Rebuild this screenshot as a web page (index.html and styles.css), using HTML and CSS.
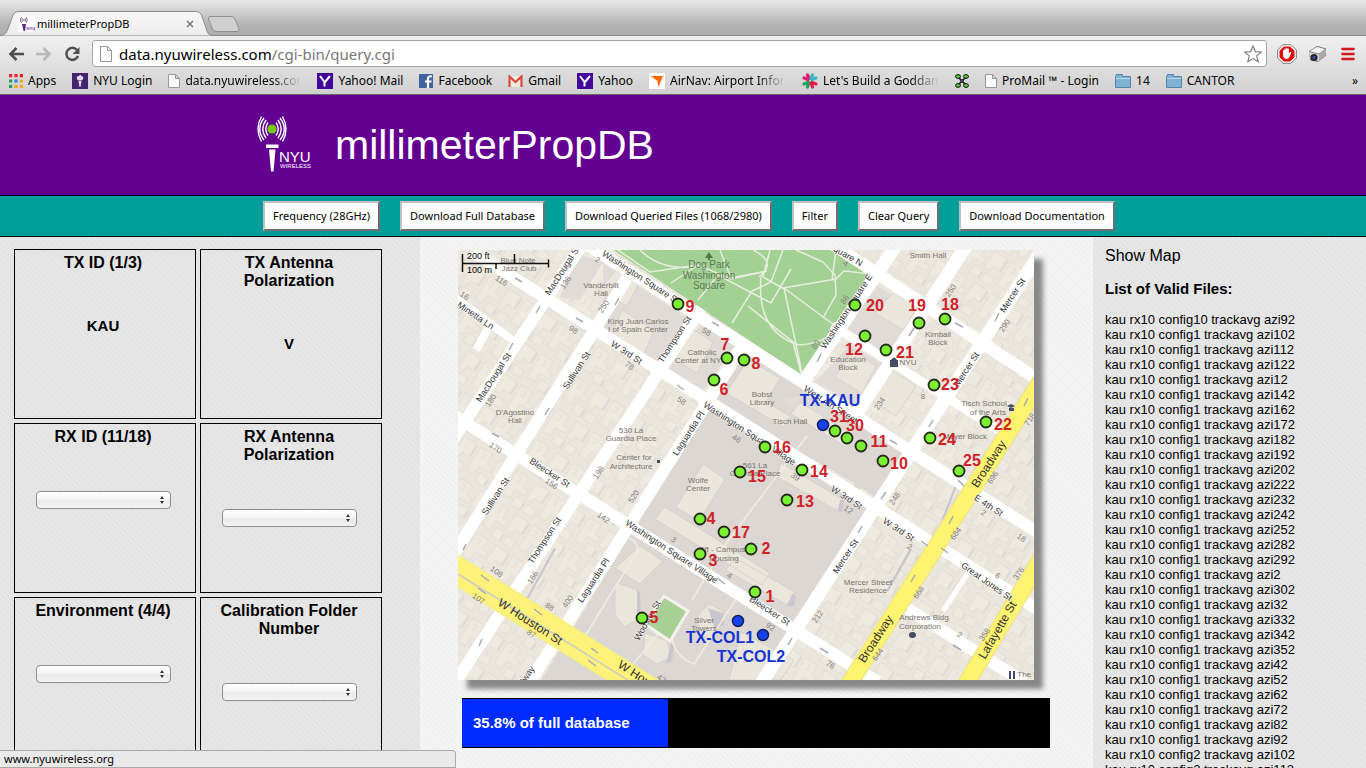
FILE: index.html
```html
<!DOCTYPE html>
<html lang="en">
<head>
<meta charset="utf-8">
<title>millimeterPropDB</title>
<link rel="stylesheet" href="styles.css">
</head>
<body>
<div class="browser">
  <div class="tabstrip">
    <svg class="tab-shapes" viewBox="0 0 250 36" aria-hidden="true">
      <defs><linearGradient id="tabfill" x1="0" y1="0" x2="0" y2="1"><stop offset="0" stop-color="#f7f7f7"/><stop offset="1" stop-color="#ececec"/></linearGradient></defs>
      <path d="M-2 36 L3 35 Q6 34 7.500 30 L13 15 Q14.500 11.500 18 11.500 H196 Q200 11.500 201.500 15 L207 31 Q208.500 35 211 35.500 L212 36Z" fill="url(#tabfill)" stroke="#8c8c8c"/>
      <path d="M210 16.500 H231 Q234 16.500 235 19 L239 29 Q239.500 31.500 237 31.500 H217 Q213.500 31.500 212.500 29 L208.500 19 Q208 16.500 210 16.500Z" fill="#d0d0d0" stroke="#909090"/>
    </svg>
    <div class="tab">
      <svg class="fav" viewBox="0 0 16 16" aria-hidden="true"><rect width="16" height="16" fill="#fff"/><g fill="none" stroke="#8a5aa8"><path d="M2.500 1q-2.500 3 0 6M7 1q2.500 3 0 6M3.500 2.500q-1 1.500 0 3M6 2.500q1 1.500 0 3"/></g><circle cx="4.800" cy="4" r="1" fill="#7c3"/><path d="M3 8h4l-1 7h-1.500z" fill="#5a2b82"/><path d="M8 11v3M8 11l2 3v-3M11 11l1 1.500 1-1.500M12 12v2M14 11v3h1.500v-3" stroke="#8a5aa8" stroke-width=".8" fill="none"/></svg>
      <span class="tab-title">millimeterPropDB</span>
      <button class="tab-close" aria-label="Close tab"><svg viewBox="0 0 8 8"><path d="M1 1l6 6M7 1l-6 6" stroke="#777" stroke-width="1.500"/></svg></button>
    </div>
  </div>
  <div class="toolbar">
    <button class="nav" aria-label="Back"><svg viewBox="0 0 16 16"><path d="M8.500 2L2.500 8l6 6M3 8h13" fill="none" stroke="#505050" stroke-width="2.600"/></svg></button>
    <button class="nav" aria-label="Forward"><svg viewBox="0 0 16 16"><path d="M7.500 2l6 6-6 6M13 8H0" fill="none" stroke="#b8b8b8" stroke-width="2.600"/></svg></button>
    <button class="nav" aria-label="Reload"><svg viewBox="0 0 16 16"><path d="M13 4A6 6 0 1 0 14 10" fill="none" stroke="#505050" stroke-width="2.500"/><path d="M15.500 1v7h-7z" fill="#505050"/></svg></button>
    <form class="omnibox">
      <svg class="page-ico" viewBox="0 0 12 16" aria-hidden="true"><path d="M.5.5h7l4 4v11H.5zM7.500.5v4h4" fill="#fafafa" stroke="#969696"/></svg>
      <a class="url" href="#">data.nyuwireless.com<span>/cgi-bin/query.cgi</span></a>
      <svg class="star" viewBox="0 0 18 18" aria-hidden="true"><path d="M9 1l2.300 5.600 6 .4-4.600 3.900 1.500 5.900L9 13.600l-5.200 3.200 1.500-5.900L.7 7l6-.4z" fill="#fff" stroke="#808080" stroke-width="1.200"/></svg>
    </form>
    <button class="ext" aria-label="Ad blocker"><svg viewBox="0 0 20 20"><path d="M6 .7h8L19.300 6v8L14 19.300H6L.7 14V6z" fill="#fff" stroke="#777"/><path d="M6.800 2.500h6.400l4.300 4.300v6.400l-4.300 4.300H6.800l-4.300-4.300V6.800z" fill="#e00a0a"/><path d="M6 10V6.500q.7-1 1.400 0V5q.7-1 1.500 0v-.6q.8-1 1.600 0V5q.8-1 1.500 0v4.500l1.200-1.500q1.200-.3 1 .7L12.500 13q-1 2-3 2T6.500 13z" fill="#fff"/></svg></button>
    <button class="ext" aria-label="Camera"><svg viewBox="0 0 20 20"><path d="M1 8L9 2l9 2.500v7L10 18l-8-2z" fill="#777"/><path d="M1 7.500L9 2.500 18 5l-7 5z" fill="#f3f3f3" stroke="#666" stroke-width=".6"/><path d="M11 10l7-5v5.500L11 17z" fill="#aaa"/><path d="M1 8l10 2.500V17l-9-2z" fill="#d8d8d8"/><circle cx="6" cy="13.500" r="3.600" fill="#222"/><circle cx="6" cy="13.500" r="1.700" fill="#4050a0"/></svg></button>
    <button class="ext menu" aria-label="Menu"><svg viewBox="0 0 14 14"><path d="M1.500 2h11M1.500 7h11M1.500 12h11" stroke="#d4171e" stroke-width="2.600" stroke-linecap="round"/></svg></button>
  </div>
  <nav class="bookmarks" aria-label="Bookmarks">
    <a href="#" class="bm"><svg class="i14" viewBox="0 0 13 13"><path d="M0 0h3v3H0zM5 0h3v3H5zM10 0h3v3h-3z" fill="#e8252b"/><path d="M0 5h3v3H0zM0 10h3v3H0z" fill="#1fa24b"/><path d="M5 5h3v3H5z" fill="#2b80ea"/><path d="M10 5h3v3h-3zM5 10h3v3H5zM10 10h3v3h-3z" fill="#f8a51b"/></svg>Apps</a>
    <a href="#" class="bm"><svg class="i16" viewBox="0 0 16 16"><path d="M0 0h16v16H0z" fill="#46236e"/><path d="M5 6q-1-3 2-3 1-2 2.500 0 2.500.5 1.500 3-.5 1.500-3 1.500T5 6M6.500 8h3l-1 6h-1z" fill="#e5dcec"/></svg>NYU Login</a>
    <a href="#" class="bm"><svg class="i12" viewBox="0 0 12 14"><path d="M.5.5h7l4 4v9H.5zM7.500.5v4h4" fill="#fafafa" stroke="#969696"/></svg><span class="fade">data.nyuwireless.com</span></a>
    <a href="#" class="bm"><svg class="i16" viewBox="0 0 16 16"><path d="M0 0h16v16H0z" fill="#42069a"/><path d="M3 3l4.500 6v4.500M13 3L8 9" stroke="#fff" stroke-width="2" fill="none"/></svg>Yahoo! Mail</a>
    <a href="#" class="bm"><svg class="i14" viewBox="0 0 14 14"><path d="M0 0h14v14H0z" fill="#4360a0"/><path d="M13 2.500q-4-1-4 2.500v9M6 7.500h6.500" stroke="#fff" stroke-width="2.200" fill="none"/></svg>Facebook</a>
    <a href="#" class="bm"><svg class="i15" viewBox="0 0 15 12"><path d="M0 1h15v11H0z" fill="#eee9df"/><path d="M1.500 12V1.500l6 5.500 6-5.500V12" fill="none" stroke="#d9483b" stroke-width="2.200"/></svg>Gmail</a>
    <a href="#" class="bm"><svg class="i16" viewBox="0 0 16 16"><path d="M0 0h16v16H0z" fill="#42069a"/><path d="M3 3l4.500 6v4.500M13 3L8 9" stroke="#fff" stroke-width="2" fill="none"/></svg>Yahoo</a>
    <a href="#" class="bm"><svg class="i16" viewBox="0 0 16 16"><path d="M0 0h16v16H0z" fill="#fff"/><path d="M2 3h12L9.500 14 8.500 8z" fill="#f60"/></svg><span class="fade">AirNav: Airport Information</span></a>
    <a href="#" class="bm"><svg class="i16" viewBox="0 0 16 16"><g stroke-width="3.200" stroke-linecap="round"><path d="M2 5l4 1.500M5.500 2L7 5" stroke="#e31b6d"/><path d="M10.500 2L9 5.500M14 5l-4 1.500" stroke="#3bb7c5"/><path d="M2 11l4-1.500M5.500 14L7 10" stroke="#20a05a"/><path d="M14 11l-4-1.500M10.500 14L9 10" stroke="#e31b4d"/></g></svg><span class="fade">Let's Build a Goddamn</span></a>
    <a href="#" class="bm" aria-label="Quadcopter"><svg class="i14" viewBox="0 0 14 14"><path d="M2 2l10 10M12 2L2 12" stroke="#111" stroke-width="1.500"/><g fill="#5c3" stroke="#111"><ellipse cx="3" cy="2.500" rx="2.500" ry="1.900"/><ellipse cx="11" cy="2.500" rx="2.500" ry="1.900"/><ellipse cx="3" cy="11.500" rx="2.500" ry="1.900"/><ellipse cx="11" cy="11.500" rx="2.500" ry="1.900"/></g><path d="M6 6h2v2H6z" fill="#fff" stroke="#111"/></svg></a>
    <a href="#" class="bm"><svg class="i12" viewBox="0 0 12 14"><path d="M.5.5h7l4 4v9H.5zM7.500.5v4h4" fill="#fafafa" stroke="#969696"/></svg>ProMail ™ - Login</a>
    <a href="#" class="bm"><svg class="i16" viewBox="0 0 16 14"><path d="M.5 2.500q0-1 1-1V.5h6v2h8v11H.5z" fill="#7fb1d3" stroke="#5485a8"/><path d="M1 4.500h14" stroke="#b5d5ea"/></svg>14</a>
    <a href="#" class="bm"><svg class="i16" viewBox="0 0 16 14"><path d="M.5 2.500q0-1 1-1V.5h6v2h8v11H.5z" fill="#7fb1d3" stroke="#5485a8"/><path d="M1 4.500h14" stroke="#b5d5ea"/></svg>CANTOR</a>
    <a href="#" class="more">»</a>
  </nav>
</div>

<header class="banner">
  <svg class="logo" viewBox="256 114 56 60" role="img" aria-label="NYU Wireless">
    <g fill="none" stroke="#fff" stroke-width="1.400"><path d="M268 122.500q-4.500 6.500 0 13M266 120q-6.500 9 0 18M264 118q-8.500 11 0 22M261.500 116.500q-7 12.500 0 25"/><path d="M276 122.500q4.500 6.500 0 13M278 120q6.500 9 0 18M280 118q8.500 11 0 22M282.500 116.500q7 12.500 0 25"/></g>
    <circle cx="272" cy="129" r="4.600" fill="#7c1"/>
    <path d="M266 144.500h12.500v3.500H266zM269 149.500h6.500l-2 22h-2.500z" fill="#fff"/>
    <text x="279" y="162" class="logo-nyu">NYU</text><text x="280" y="168" class="logo-w">WIRELESS</text>
  </svg>
  <h1>millimeterPropDB</h1>
</header>
<div class="actions">
  <button>Frequency (28GHz)</button><button>Download Full Database</button><button>Download Queried Files (1068/2980)</button><button>Filter</button><button>Clear Query</button><button>Download Documentation</button>
</div>

<main class="content">
  <section class="filters" aria-label="Filters">
    <div class="card"><h2>TX ID (1/3)</h2><strong>KAU</strong></div>
    <div class="card"><h2>TX Antenna<br>Polarization</h2><strong>V</strong></div>
    <div class="card"><label for="rx">RX ID (11/18)</label><span class="pick"><select id="rx"><option></option></select></span></div>
    <div class="card"><label for="rxp">RX Antenna<br>Polarization</label><span class="pick"><select id="rxp"><option></option></select></span></div>
    <div class="card"><label for="env">Environment (4/4)</label><span class="pick"><select id="env"><option></option></select></span></div>
    <div class="card"><label for="cal">Calibration Folder Number</label><span class="pick"><select id="cal"><option></option></select></span></div>
  </section>

  <section class="center" aria-label="Map">
    <svg class="map" viewBox="458 250 576 430" role="img" aria-label="Measurement locations">
      <defs>
        <pattern id="lots" width="43" height="37" patternUnits="userSpaceOnUse" patternTransform="rotate(33)">
          <path d="M2 2h14v11h6v6H11v10H2zM25 2h15v14h-8v5h-7zM15 24h10v10H15zM29 25h11v9H29zM6 6h4v5H6" fill="#efeae0" stroke="#ded8d0" stroke-width=".7"/>
          <path d="M41 3v13M26 26v8" stroke="#d3d0d4" stroke-width="1"/>
        </pattern>
      </defs>
      <path d="M450 240h600v450H450z" fill="#ece7de"/>
      <path d="M450 240h600v450H450z" fill="url(#lots)"/>
      <path d="M710 405L783 458 870 510 763 682H540zM745 350L914 457 878 512 715 400z" fill="#dcd7d3"/>
      <path d="M603 263L690 320 650 368 604 332zM714 310L738 340 704 390 664 367zM805 395L855 425 850 445 780 400zM875 285L925 312 885 362 840 330zM850 345L885 365 858 405 815 382zM575 253L603 262 580 300 560 297z" fill="#e0dbd6"/>
      <g fill="#ebe6dc" stroke="#d4cdc6" stroke-width=".8">
        <path d="M748 360l32 18-14 24 25 15-7 10-58-34zM800 402l52 32-7 12-54-32zM798 450l58 33-5 12-63-32zM620 265l22 13-15 28-28-16zM689 327l24 15-16 31-23-14zM622 310l32 20-10 24-32-20zM852 350l24 16-14 27-27-16zM893 370l23 16-20 30-24-15zM895 290l24 15-16 25-28-17z"/>
        <path d="M703 464l22 15-26 42-23-14zM665 507l105 66-8 12-107-66zM735 558l60 34-8 13-61-35zM640 546l23 15-23 23-25-16zM615 582l22 8 5 28-18 9-9-12zM645 633l22 8 4 16-14 7-14-9zM698 615l11-11 14 7-8 29-15-5z"/>
        <path d="M781 463l61 36-4 12-61-34zM741 632l53 28-13 20h-52zM860 486l20 14-5 10-19-11z"/>
      </g>
      <g fill="#c9c6ce"><path d="M637 590l3 2 1 26-4 2zM671 643l3 2-2 16-6 3zM792 594l4 2-2 10-7 0zM840 500l4 0-2 12-4-1zM708 608l15 5 1 12-9 4zM910 548l2 2-24 42-2-1zM554 548l2 1-30 54-2-1zM955 485l2 1-20 52-2-1zM593 330l2 1-30 46-2-1z"/></g>
      <g fill="none" stroke="#f1ece3" stroke-width="1.500"><path d="M622 536q20 5 14 18l-24 38-28 46M692 600l35-58 80-106M668 622l-40 48M672 640q5 18 22 24l44-68"/></g>
      <path d="M664 596l24 15-18 30-25-17z" fill="#a8cf96" stroke="#f5f2ee" stroke-width="3"/>
      <path d="M603 243L803 376 875 270 833 243z" fill="#a3d093"/>
      <g fill="none" stroke="#e8eee0" stroke-width="1.500">
        <path d="M618 250l32 22 48-7 33 14 36-8M698 300l20-25 53 28 20-34M732 323l20-32 19-9 12-32M671 283l27-18M748 306l45 36 8 31M784 289l-21-12 7-27M784 288l50 37M784 288l18 85M761 277q-5 55 38 68 35-2 46-30M783 288l53-9 8-8 28 3M796 250l27 12 12 13 1 20-13 23M836 250l-4 30M640 250q20 20 52 17M720 250l11 28 35-7M753 250q25 12 6 27"/>
      </g>
      <g fill="none" stroke="#fff">
        <g stroke-width="12"><path d="M575 237L1040 534M473 252L1040 611M450 413L878 682M905 607L1024 682M826 240L1040 381"/></g>
        <path d="M832 325L1003 433" stroke-width="9"/><path d="M450 294L515 342M490 325L476 350" stroke-width="8"/>
        <g stroke-width="12"><path d="M588 236L452 441M627 278L452 557M701 308L452 687M741 349L526 688"/></g>
        <g stroke-width="13"><path d="M1042 250L758 688M898 243L801 385M968 243L858 412"/></g>
        <path d="M968 573l-25 38" stroke-width="5"/>
      </g>
      <path d="M450 566L658 696" stroke="#f6f07e" stroke-width="28"/><path d="M450 566L658 696" stroke="#fff27a" stroke-width="24"/><path d="M450 569L658 699" stroke="#d4d2b5" stroke-width="2"/>
      <g stroke="#efe68c" stroke-width="18"><path d="M1048 370L844 692M1044 554L960 694"/></g><g stroke="#fff46f" stroke-width="15"><path d="M1048 370L844 692M1044 554L960 694"/></g>
      <g fill="none" stroke="#a5aab5" stroke-width="1.500">
        <path d="M522 282l-7-4M540 306l-4 7M583 322l-7-4M619 298l-4 7M513 343l-4 7M545 415l4-7M492 433l7 4M684 390l-7-5M712 322l7 4M489 581l-8-6M478 588l8 6M542 615l-8-6M598 653l-7-5M588 660l8 6M717 578l8 6M886 492l-5 7M862 526l-4 7M792 638l-4 7M820 648l8 5M953 516l-4 8M915 575l-4 7M928 546l-7-5M948 553l-7-5M953 645l8 5M890 440l7 4M955 323l8 4M909 336l5-8M999 313l-4 8M1024 406l4-8M933 420l-4 7M958 480l6 6M817 362l4-8M463 550l3-6M482 639l-3 7"/>
      </g>
      <g class="street">
        <text transform="translate(638 279)rotate(33)">Washington Square S</text><text transform="translate(565 272)rotate(-57)">MacDougal St</text>
        <text transform="translate(474 318)rotate(34)">Minetta Ln</text><text transform="translate(496 379)rotate(-57)">MacDougal St</text>
        <text transform="translate(579 372)rotate(-57)">Sullivan St</text><text transform="translate(677 341)rotate(-57)">Thompson St</text>
        <text transform="translate(625 355)rotate(33)">W 3rd St</text><text transform="translate(691 435)rotate(-57)">Laguardia Pl</text>
        <text transform="translate(748 436)rotate(33)">Washington Square Village</text><text transform="translate(548 475)rotate(33)">Bleecker St</text>
        <text transform="translate(498 498)rotate(-57)">Sullivan St</text><text transform="translate(547 542)rotate(-57)">Thompson St</text>
        <text transform="translate(596 582)rotate(-57)">Laguardia Pl</text><text transform="translate(670 554)rotate(33)">Washington Square Village</text>
        <text transform="translate(768 613)rotate(33)">Bleecker St</text><text transform="translate(650 622)rotate(-60)">Wooster St</text>
        <text transform="translate(829 407)rotate(33)">West 4th Street</text><text transform="translate(849 313)rotate(-57)">Washington Square E</text>
        <text transform="translate(844 257)rotate(30)">Square N</text><text transform="translate(1015 297)rotate(-57)">Mercer St</text>
        <text transform="translate(969 371)rotate(-57)">Mercer St</text><text transform="translate(848 558)rotate(-57)">Mercer St</text>
        <text transform="translate(845 500)rotate(33)">W 3rd St</text><text transform="translate(897 532)rotate(33)">W 3rd St</text>
        <text transform="translate(987 508)rotate(33)">E 4th St</text><text transform="translate(985 584)rotate(35)">Great Jones St</text>
        <text transform="translate(521 690)rotate(-57)">W Broadway</text>
      </g>
      <g class="street big">
        <text transform="translate(528 625)rotate(33)">W Houston St</text><text transform="translate(648 687)rotate(33)">W Houston St</text>
        <text transform="translate(992 466)rotate(-57)">Broadway</text><text transform="translate(879 641)rotate(-57)">Broadway</text><text transform="translate(1001 632)rotate(-60)">Lafayette St</text>
      </g>
      <g class="place">
        <text x="518" y="263">Blue Note</text><text x="519" y="271">Jazz Club</text><text x="601" y="288">Vanderbilt</text><text x="601" y="296">Hall</text>
        <text x="638" y="324">King Juan Carlos</text><text x="638" y="332">I of Spain Center</text><text x="702" y="355">Catholic</text><text x="701" y="363">Center at NYU</text>
        <text x="515" y="415">D'Agostino</text><text x="515" y="423">Hall</text><text x="631" y="433">530 La</text><text x="631" y="441">Guardia Place</text>
        <text x="634" y="460">Center for</text><text x="631" y="469">Architecture</text><text x="762" y="397">Bobst</text><text x="762" y="405">Library</text>
        <text x="790" y="424">Tisch Hall</text><text x="928" y="258">Smith Hall</text><text x="938" y="337">Kimball</text><text x="938" y="345">Block</text>
        <text x="848" y="362">Education</text><text x="848" y="370">Block</text><text x="908" y="365">NYU</text><text x="984" y="406">Tisch School</text><text x="988" y="415">of the Arts</text>
        <text x="965" y="439">Meyer Block</text><text x="698" y="483">Wolfe</text><text x="698" y="491">Center</text><text x="755" y="468">561 La</text><text x="755" y="476">Guardia Place</text>
        <text x="722" y="552">Off - Campus</text><text x="724" y="561">Housing</text><text x="704" y="623">Silver</text><text x="704" y="631">Towers</text>
        <text x="868" y="585">Mercer Street</text><text x="868" y="593">Residence</text><text x="924" y="620">Andrews Bldg</text><text x="920" y="629">Corporation</text><text x="1028" y="677">The S</text>
      </g>
      <g class="place park"><text x="709" y="268">Dog Park</text><text x="709" y="279">Washington</text><text x="709" y="289">Square</text></g>
      <g fill="#454c66"><path d="M890 360h8v7h-8zM891 360q3-5 6 0M1007 406l4-2 4 2-4 2zM1009 408h5v3h-5zM909 635a3.500 3 0 1 0 7 0a3.500 3 0 1 0-7 0M1009 671h2v8h-2zM1013 671h2v8h-2zM657 460h3v3h-3z"/><path d="M709 252l4 6h-8zM708 258h2v2h-2z" fill="#557a48"/></g>
      <g class="num">
        <text transform="translate(500 283)rotate(33)">116</text><text transform="translate(596 262)rotate(33)">2</text><text transform="translate(568 284)rotate(-57)">136</text><text transform="translate(463 298)rotate(33)">16</text><text transform="translate(606 308)rotate(-57)">250</text><text transform="translate(572 332)rotate(33)">98</text><text transform="translate(705 334)rotate(33)">58</text><text transform="translate(628 368)rotate(33)">78</text><text transform="translate(493 402)rotate(-57)">180</text><text transform="translate(680 403)rotate(33)">58</text><text transform="translate(494 450)rotate(33)">170</text><text transform="translate(735 441)rotate(33)">46</text><text transform="translate(844 266)rotate(33)">4</text><text transform="translate(847 301)rotate(-57)">86</text><text transform="translate(818 346)rotate(-57)">80</text><text transform="translate(953 292)rotate(-57)">250</text><text transform="translate(1007 327)rotate(-57)">290</text><text transform="translate(882 405)rotate(-57)">234</text><text transform="translate(923 399)">8</text><text transform="translate(1032 421)rotate(-57)">718</text><text transform="translate(550 486)rotate(33)">156</text><text transform="translate(601 474)rotate(-57)">198</text><text transform="translate(636 498)rotate(-57)">520</text><text transform="translate(602 520)rotate(33)">142</text><text transform="translate(495 574)rotate(33)">108</text><text transform="translate(535 579)rotate(-57)">166</text><text transform="translate(548 609)rotate(33)">88</text><text transform="translate(570 603)rotate(-57)">400</text><text transform="translate(477 601)rotate(33)">107</text><text transform="translate(530 636)rotate(33)">87</text><text transform="translate(660 681)rotate(33)">42</text><text transform="translate(672 542)rotate(33)">3</text><text transform="translate(728 578)rotate(33)">4</text><text transform="translate(794 479)rotate(33)">39</text><text transform="translate(847 512)rotate(33)">12</text><text transform="translate(897 500)rotate(-57)">248</text><text transform="translate(995 479)rotate(-57)">696</text><text transform="translate(982 515)rotate(33)">2</text><text transform="translate(958 535)rotate(-57)">684</text><text transform="translate(1020 540)rotate(33)">18</text><text transform="translate(908 549)rotate(33)">2</text><text transform="translate(996 578)rotate(33)">6</text><text transform="translate(1021 575)rotate(-57)">376</text><text transform="translate(921 594)rotate(-57)">668</text><text transform="translate(820 618)rotate(-57)">212</text><text transform="translate(880 656)rotate(-57)">644</text><text transform="translate(829 667)rotate(33)">76</text><text transform="translate(958 637)rotate(33)">2</text><text transform="translate(987 636)rotate(-57)">358</text><text transform="translate(769 629)rotate(33)">92</text>
      </g>
      <path d="M462.500 254v18M462.500 263.500h86v-4v8M514.500 254v9M496 264v5" fill="none" stroke="#111" stroke-width="1.500"/>
      <g class="scale"><text x="467" y="259">200 ft</text><text x="467" y="273">100 m</text></g>
      <g fill="#7cf032" stroke="#23281a" stroke-width="1.800">
        <circle cx="678" cy="304" r="5.500"/><circle cx="727" cy="358" r="5.500"/><circle cx="744" cy="360" r="5.500"/><circle cx="714" cy="380" r="5.500"/><circle cx="855" cy="305" r="5.500"/><circle cx="865" cy="336" r="5.500"/><circle cx="886" cy="350" r="5.500"/><circle cx="919" cy="323" r="5.500"/><circle cx="945" cy="319" r="5.500"/><circle cx="934" cy="385" r="5.500"/><circle cx="986" cy="422" r="5.500"/><circle cx="930" cy="438" r="5.500"/><circle cx="959" cy="471" r="5.500"/><circle cx="835" cy="431" r="5.500"/><circle cx="847" cy="438" r="5.500"/><circle cx="861" cy="446" r="5.500"/><circle cx="883" cy="461" r="5.500"/><circle cx="765" cy="447" r="5.500"/><circle cx="740" cy="472" r="5.500"/><circle cx="802" cy="470" r="5.500"/><circle cx="787" cy="500" r="5.500"/><circle cx="700" cy="519" r="5.500"/><circle cx="724" cy="532" r="5.500"/><circle cx="700" cy="554" r="5.500"/><circle cx="751" cy="549" r="5.500"/><circle cx="755" cy="592" r="5.500"/><circle cx="642" cy="618" r="5.500"/>
      </g>
      <g fill="#1741ea" stroke="#14205c" stroke-width="1.500"><circle cx="823" cy="425" r="5.500"/><circle cx="738" cy="621" r="5.500"/><circle cx="763" cy="635" r="5.500"/></g>
      <g class="rx">
        <text x="690" y="312">9</text><text x="725" y="350">7</text><text x="756" y="369">8</text><text x="724" y="395">6</text><text x="875" y="311">20</text><text x="854" y="355">12</text><text x="905" y="358">21</text><text x="917" y="311">19</text><text x="950" y="310">18</text><text x="950" y="390">23</text><text x="1003" y="430">22</text><text x="947" y="445">24</text><text x="972" y="466">25</text><text x="839" y="422">31</text><text x="855" y="431">30</text><text x="879" y="447">11</text><text x="899" y="469">10</text><text x="782" y="453">16</text><text x="757" y="482">15</text><text x="819" y="477">14</text><text x="805" y="507">13</text><text x="711" y="524">4</text><text x="741" y="538">17</text><text x="713" y="566">3</text><text x="766" y="554">2</text><text x="770" y="602">1</text><text x="654" y="623">5</text>
      </g>
      <g class="tx"><text x="830" y="406">TX-KAU</text><text x="720" y="643">TX-COL1</text><text x="751" y="662">TX-COL2</text></g>
    </svg>
    <div class="meter"><div class="meter-fill" style="width:35%">35.8% of full database</div></div>
  </section>

  <aside class="files">
    <a class="show" href="#">Show Map</a>
    <h3>List of Valid Files:</h3>
    <ul>
      <li>kau rx10 config10 trackavg azi92</li><li>kau rx10 config1 trackavg azi102</li><li>kau rx10 config1 trackavg azi112</li><li>kau rx10 config1 trackavg azi122</li><li>kau rx10 config1 trackavg azi12</li><li>kau rx10 config1 trackavg azi142</li><li>kau rx10 config1 trackavg azi162</li><li>kau rx10 config1 trackavg azi172</li><li>kau rx10 config1 trackavg azi182</li><li>kau rx10 config1 trackavg azi192</li><li>kau rx10 config1 trackavg azi202</li><li>kau rx10 config1 trackavg azi222</li><li>kau rx10 config1 trackavg azi232</li><li>kau rx10 config1 trackavg azi242</li><li>kau rx10 config1 trackavg azi252</li><li>kau rx10 config1 trackavg azi282</li><li>kau rx10 config1 trackavg azi292</li><li>kau rx10 config1 trackavg azi2</li><li>kau rx10 config1 trackavg azi302</li><li>kau rx10 config1 trackavg azi32</li><li>kau rx10 config1 trackavg azi332</li><li>kau rx10 config1 trackavg azi342</li><li>kau rx10 config1 trackavg azi352</li><li>kau rx10 config1 trackavg azi42</li><li>kau rx10 config1 trackavg azi52</li><li>kau rx10 config1 trackavg azi62</li><li>kau rx10 config1 trackavg azi72</li><li>kau rx10 config1 trackavg azi82</li><li>kau rx10 config1 trackavg azi92</li><li>kau rx10 config2 trackavg azi102</li><li>kau rx10 config2 trackavg azi112</li>
    </ul>
  </aside>
</main>
<div class="status">www.nyuwireless.org</div>
</body>
</html>
```
FILE: styles.css
```css
* { box-sizing: border-box; }
body {
  margin: 0;
  height: 100vh;
  display: flex;
  flex-direction: column;
  overflow: hidden;
  font-family: "Liberation Sans", Arial, sans-serif;
  color: #000;
}
a { color: inherit; text-decoration: none; }
button { font: inherit; color: inherit; }
svg { display: block; flex: none; }

/* browser frame */
.browser {
  flex: none;
  font-family: "Noto Sans", sans-serif;
  font-size: 12px;
  background: linear-gradient(#f0f0f0 36px, #d0d0d0);
  border-bottom: 1px solid #666;
}
.tabstrip {
  position: relative;
  height: 36px;
  background: linear-gradient(#e8e8e8, #b4b4b4 70%, #adadad);
  border-bottom: 1px solid #8c8c8c;
}
.tab-shapes { position: absolute; left: 0; top: 0; width: 250px; height: 36px; }
.tab {
  position: relative;
  display: flex;
  align-items: center;
  width: 194px;
  padding: 16px 0 0 19px;
}
.fav { width: 16px; height: 16px; margin-right: 2px; }
.tab-title { font-size: 11px; line-height: 16px; }
.tab-close { margin-left: auto; padding: 0; border: 0; background: none; }
.tab-close svg { width: 8px; height: 8px; }
.toolbar { display: flex; align-items: center; height: 33px; padding: 2px 11px 0 8px; }
.nav { width: 28px; padding: 0; border: 0; background: none; }
.nav svg { width: 16px; height: 16px; }
.omnibox {
  flex: 1;
  display: flex;
  align-items: center;
  height: 27px;
  margin-right: 10px;
  padding: 0 4px 0 7px;
  background: #fff;
  border: 1px solid #a6a6a6;
  border-radius: 3px;
}
.page-ico { width: 12px; height: 16px; margin-right: 7px; }
.url { flex: 1; font-size: 15px; line-height: 20px; }
.url span { color: #777; }
.star { width: 18px; height: 18px; }
.ext { padding: 0; border: 0; margin-right: 11px; background: none; }
.ext svg { width: 20px; height: 20px; }
.menu { margin: 0 0 0 2px; }
.menu svg { width: 14px; height: 14px; }
.bookmarks { display: flex; align-items: center; height: 25px; padding: 0 8px 2px 9px; white-space: nowrap; }
.bm { display: flex; align-items: center; gap: 5px; margin-right: 16px; }
.i12 { width: 12px; height: 14px; }
.i14 { width: 14px; height: 14px; }
.i15 { width: 15px; height: 12px; }
.i16 { width: 16px; height: 16px; }
.fade {
  width: 116px;
  overflow: hidden;
  -webkit-mask-image: linear-gradient(90deg, #000 75%, transparent);
  mask-image: linear-gradient(90deg, #000 75%, transparent);
}
.more { margin-left: auto; }

/* page head */
.banner {
  flex: none;
  display: flex;
  align-items: center;
  gap: 23px;
  height: 101px;
  padding-left: 256px;
  background: #630091;
  border-bottom: 1px solid #000;
  color: #fff;
}
.logo { width: 56px; height: 60px; margin-bottom: 2px; }
.logo-nyu { font-size: 15px; fill: #fff; }
.logo-w { font-size: 6px; fill: #fff; }
.banner h1 { margin: 0; font-size: 41px; font-weight: 400; line-height: 48px; }
.actions {
  flex: none;
  display: flex;
  align-items: center;
  gap: 20px;
  height: 41px;
  padding-left: 263px;
  background: #009e9a;
  border-bottom: 1px solid #000;
}
.actions button {
  height: 30px;
  padding: 0 8px;
  background: #fff;
  border: 2px solid;
  border-color: #c0c0c0 #6e6e6e #6e6e6e #c0c0c0;
  font: 11px/16px "Noto Sans", sans-serif;
  white-space: nowrap;
}

/* content */
.content {
  flex: 1;
  min-height: 0;
  display: grid;
  grid-template-columns: 420px 1fr 273px;
  background: repeating-linear-gradient(45deg, #f4f4f4 0 3px, #efefef 3px 4px);
}
.filters, .files { background: repeating-linear-gradient(45deg, #e6e6e6 0 3px, #e1e1e1 3px 4px); overflow: hidden; }
.filters {
  display: grid;
  grid-template-columns: 182px 182px;
  grid-auto-rows: 170px;
  gap: 4px;
  padding: 12px 0 0 14px;
}
.card {
  display: flex;
  flex-direction: column;
  align-items: center;
  gap: 45px;
  padding: 4px 18px 4px 14px;
  border: 1px solid #000;
  text-align: center;
}
.card h2, .card label { margin: 0; font-size: 16px; font-weight: 700; line-height: 18px; }
.card strong { font-size: 15px; line-height: 18px; }
.pick { position: relative; width: 135px; height: 18px; }
.pick::before, .pick::after {
  content: "";
  position: absolute;
  right: 7px;
  border: 2px solid transparent;
  pointer-events: none;
}
.pick::before { top: 3px; border-bottom: 3px solid #333; }
.pick::after { top: 10px; border-top: 3px solid #333; }
.pick select {
  display: block;
  width: 100%;
  height: 18px;
  appearance: none;
  background: linear-gradient(#fff, #f4f4f4 50%, #ebebeb 50%, #f2f2f2);
  border: 1px solid #8e8e8e;
  border-radius: 4px;
}
.center { padding: 13px 43px 0 38px; }
.map { width: calc(100% - 16px); height: auto; box-shadow: 9px 9px 5px #888; }
.map text { font-family: "Liberation Sans", Arial, sans-serif; text-anchor: middle; }
.street { font-size: 9px; fill: #333; stroke: #fff; stroke-width: 1px; paint-order: stroke; }
.big { font-size: 12px; stroke: none; }
.place { font-size: 8px; fill: #77736f; }
.park { font-size: 10px; fill: #5f7a56; }
.num { font-size: 8px; fill: #85817d; }
.map .scale text { font-size: 9px; text-anchor: start; }
.rx { font-size: 16px; font-weight: 700; fill: #d02028; }
.tx { font-size: 16px; font-weight: 700; fill: #1534cf; }
.meter { height: 50px; margin: 18px 0 0 4px; padding: 1px 0; background: #000; }
.meter-fill {
  height: 48px;
  padding-left: 11px;
  background: #002bff;
  color: #fff;
  font-size: 15px;
  font-weight: 700;
  line-height: 48px;
  white-space: nowrap;
}
.files { padding: 10px 12px 0; }
.show { display: block; font-size: 16px; line-height: 18px; }
.files h3 { margin: 16px 0 15px; font-size: 15px; line-height: 16px; }
.files ul { margin: 0; padding: 0; list-style: none; font-size: 13px; line-height: 15px; white-space: nowrap; }
.status {
  position: absolute;
  left: 0;
  bottom: 0;
  width: 456px;
  height: 18px;
  padding-left: 4px;
  background: #e9e9e9;
  border: 1px solid #aaa;
  border-left: 0;
  border-top-right-radius: 4px;
  font: 11px/16px "Noto Sans", sans-serif;
}
```
